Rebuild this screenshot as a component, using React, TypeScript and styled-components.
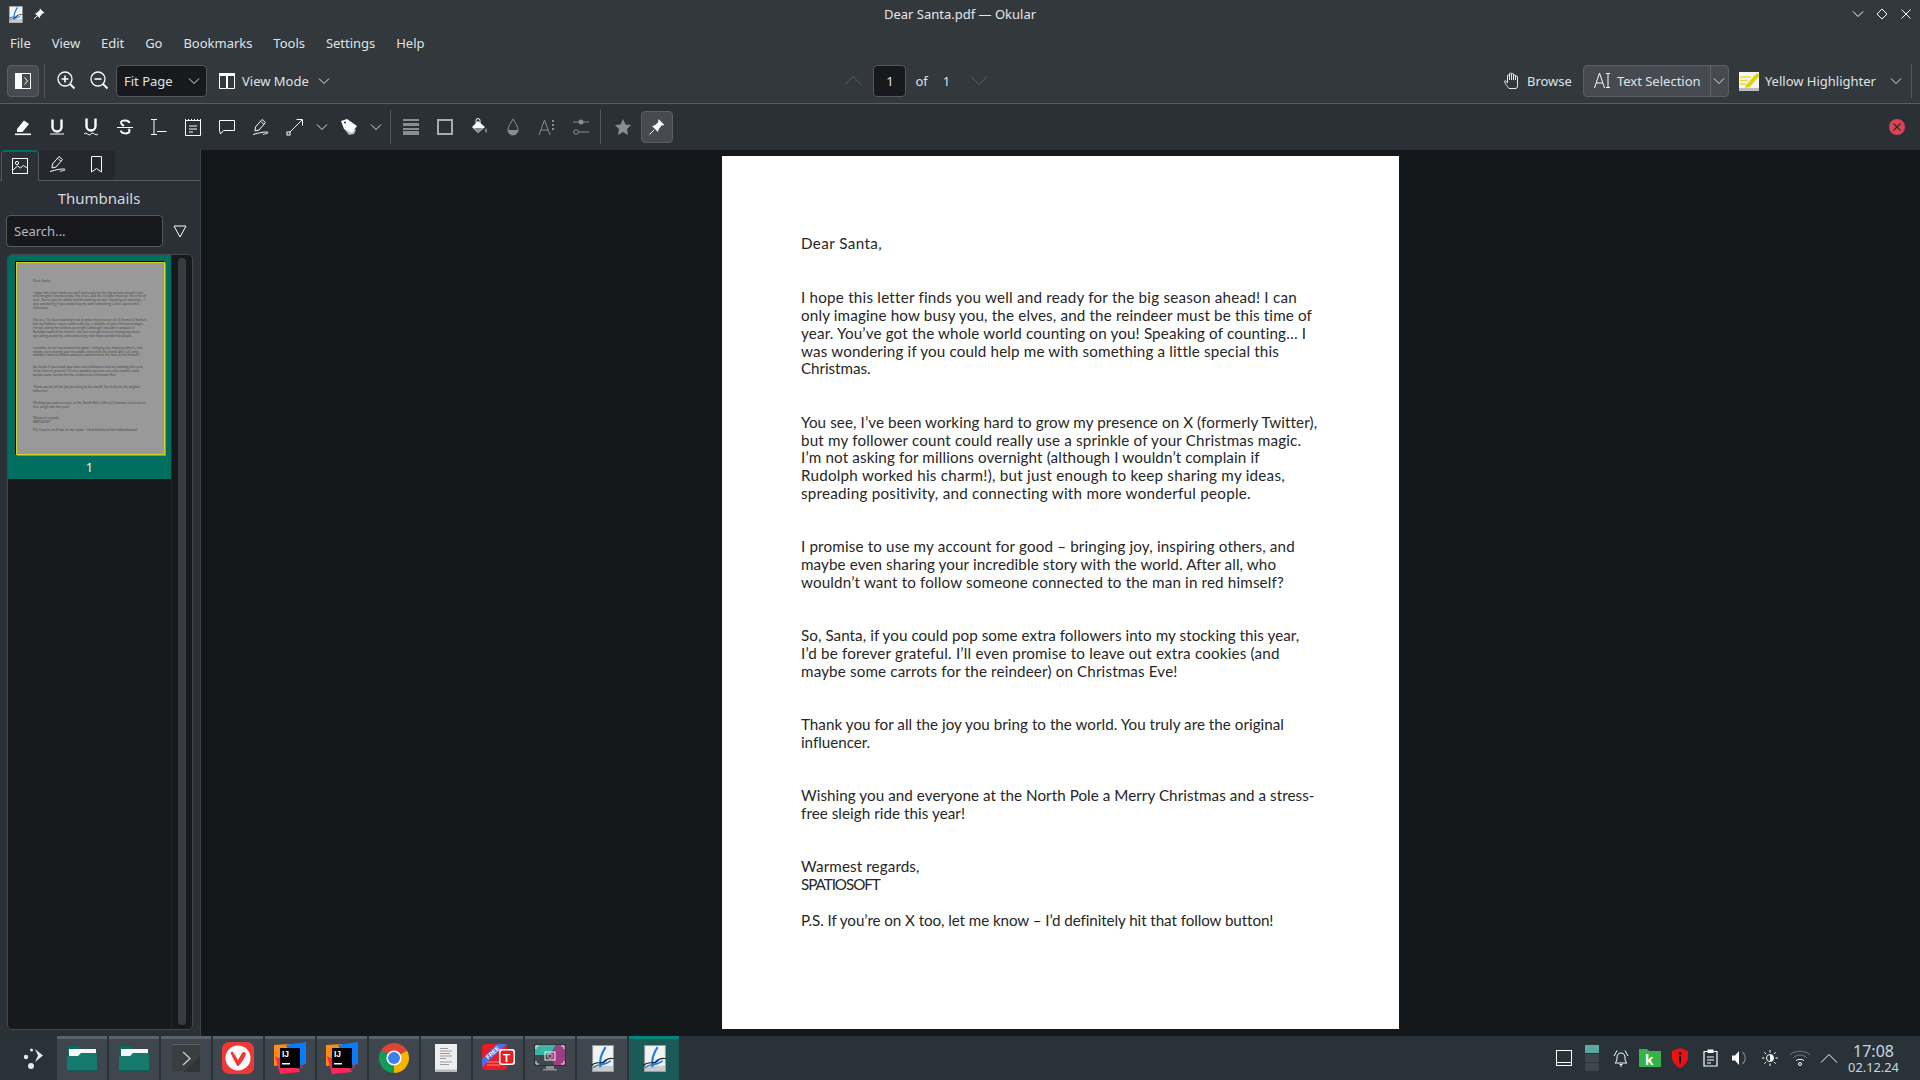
import React from "react";
import styled, { createGlobalStyle } from "styled-components";

const Global = createGlobalStyle`
  html, body { margin: 0; padding: 0; background: #14181b; }
  * { box-sizing: border-box; }
`;

const Root = styled.div`
  width: 1920px; height: 1080px; overflow: hidden;
  display: flex; flex-direction: column;
  font-family: "Noto Sans", sans-serif; font-size: 13px; color: #dfe3e6;
`;
const Head = styled.div`background: #33383c; border-bottom: 1px solid #5a5d60; height: 104px; display: flex; flex-direction: column; flex: none;`;
const TitleBar = styled.div`
  height: 28px; flex: none; display: flex; align-items: center; position: relative; padding: 0 6px 0 7px;
`;
const TitleText = styled.div`position: absolute; left: 0; right: 0; top: 5px; text-align: center; line-height: 18px; color: #e4e7ea; pointer-events: none;`;
const TitleIcons = styled.div`display: flex; align-items: center; gap: 9px;`;
const WinButtons = styled.div`margin-left: auto; display: flex; gap: 8px;`;
const MenuBar = styled.div`height: 30px; flex: none; display: flex; align-items: center;`;
const MenuItem = styled.div`padding: 0 10.45px; line-height: 18px; color: #dfe3e6; &:first-child { padding-left: 10px; }`;
const ToolBar = styled.div`height: 45px; flex: none; display: flex; align-items: center; padding: 0 8px 0 7px;`;
const Spacer = styled.div`flex: 1;`;
const Sep = styled.div<{ $h: number }>`width: 1px; height: ${p => p.$h}px; background: #55595d; flex: none;`;
const FlatBtn = styled.div<{ $w: number; $on?: boolean }>`
  width: ${p => p.$w}px; height: 32px; flex: none; display: flex; align-items: center; justify-content: center;
  border-radius: 4px; border: 1px solid ${p => (p.$on ? "#5b5f64" : "transparent")};
  background: ${p => (p.$on ? "#474b51" : "transparent")};
`;
const Combo = styled.div<{ $w: number }>`
  width: ${p => p.$w}px; height: 32px; flex: none; background: #18191d; border: 1px solid #55585c; border-radius: 4px;
  display: flex; align-items: center; justify-content: center;
`;
const ComboLabel = styled.span`flex: 1; padding-left: 7px;`;
const TextBtn = styled.div`display: flex; align-items: center; height: 32px; flex: none;`;
const Split = styled.div`
  width: 146px; height: 32px; flex: none; display: flex; background: #474b51; border: 1px solid #5b5f64; border-radius: 4px; margin: 0 10px 0 11px;
`;
const SplitMain = styled.div`flex: 1; display: flex; align-items: center; padding-left: 10px; border-right: 1px solid #62666a;`;
const SplitArrow = styled.div`width: 17px; display: flex; align-items: center; justify-content: center;`;
const Gap = styled.span<{ $w: number }>`display: inline-block; flex: none; width: ${p => p.$w}px;`;

const AnnoBar = styled.div`height: 46px; flex: none; background: #2b2f36; display: flex; align-items: center; padding: 0 15px 0 6px;`;
const Slot = styled.div<{ $w?: number }>`width: ${p => p.$w ?? 34}px; height: 32px; flex: none; display: flex; align-items: center; justify-content: center;`;
const PinBtn = styled.div`
  width: 32px; height: 32px; flex: none; margin-left: 1px; display: flex; align-items: center; justify-content: center;
  background: #474b51; border: 1px solid #5b5f64; border-radius: 4px;
`;

const Body = styled.div`flex: 1; min-height: 0; display: flex;`;
const Side = styled.div`
  width: 201px; flex: none; background: #2b2f36; border-right: 1px solid #3c4045; display: flex; flex-direction: column; padding-bottom: 6px;
`;
const Tabs = styled.div`height: 31px; flex: none; display: flex; border-bottom: 1px solid #55595d; padding-left: 1px; position: relative;`;
const Tab = styled.div<{ $on?: boolean }>`
  width: 38px; height: ${p => (p.$on ? 31 : 30)}px; display: flex; align-items: center; justify-content: center; flex: none;
  background: ${p => (p.$on ? "#2b2f36" : "#25282e")}; padding-bottom: 2px;
  ${p => p.$on && "border-top: 2px solid #006e5f; border-left: 1px solid #55595d; border-right: 1px solid #55595d; border-radius: 4px 4px 0 0;"}
`;
const SideTitle = styled.div`height: 34px; flex: none; display: flex; align-items: center; justify-content: center; color: #d5dade; font-size: 15px; padding-right: 2px;`;
const SearchRow = styled.div`display: flex; align-items: center; padding-left: 6px; flex: none; height: 32px;`;
const SearchBox = styled.div`
  width: 157px; height: 32px; background: #18191d; border: 1px solid #55585c; border-radius: 4px; padding-left: 7px; display: flex; align-items: center; color: #b6babd; flex: none;
`;
const FilterSlot = styled.div`flex: none; width: 34px; display: flex; justify-content: center;`;
const ThumbList = styled.div`
  flex: 1; margin: 7px 7px 0 7px; background: #17191c; border: 1px solid #45484d; border-radius: 5px; display: flex; overflow: hidden; min-height: 0;
`;
const ThumbColumn = styled.div`width: 164px; flex: none; border-right: 1px solid #24272a;`;
const ThumbItem = styled.div`background: #006e5f; height: 224px; padding: 7px 0 0 8px; display: flex; flex-direction: column;`;
const ThumbSheet = styled.div`
  width: 149px; height: 193px; background: #999999; border: 1px solid #d6cf2a; box-shadow: -1px -1px 0 #000, 1px 1px 0 #8a8a8a; padding: 16.5px 0 0 16px; overflow: hidden; flex: none;
`;
const ThumbLabel = styled.div`height: 24px; line-height: 24px; margin-left: -8px; text-align: center; color: #e8eeee;`;
const ScrollCol = styled.div`flex: 1; display: flex; justify-content: center; padding: 3px 0 4px;`;
const ScrollThumb = styled.div`width: 8px; background: #383c41; border-radius: 4px;`;

const Viewer = styled.div`flex: 1; background: #14181b; display: flex; justify-content: center; padding-top: 6px; align-items: flex-start;`;
const Sheet = styled.div`width: 677px; height: 873px; background: #fff; padding: 79px 0 0 79px; flex: none;`;
const LetterText = styled.div<{ $k: number; $c: string }>`
  font-family: "Lato", sans-serif; font-size: ${p => 15.2 * p.$k}px; line-height: ${p => 17.8 * p.$k}px;
  color: ${p => p.$c}; white-space: nowrap;
`;
const Para = styled.div<{ $k: number; $m: number }>`margin-top: ${p => p.$m * p.$k}px;`;
const Line = styled.div<{ $ls: number }>`letter-spacing: ${p => p.$ls}px;`;

const TaskBar = styled.div`height: 44px; flex: none; background: #2a3239; display: flex; align-items: stretch;`;
const StartSlot = styled.div`width: 57px; flex: none; display: flex; align-items: center; justify-content: center; padding-left: 10px;`;
const TaskList = styled.div`display: flex; gap: 2px;`;
const TaskItem = styled.div<{ $on?: boolean }>`
  width: 50px; display: flex; align-items: center; justify-content: center; padding-bottom: 3px;
  background: ${p => (p.$on ? "#1a5a57" : "#3f464e")};
  border-top: 3px solid ${p => (p.$on ? "#00877a" : "#59616a")};
`;
const Tray = styled.div`margin-left: auto; display: flex; align-items: center; padding-right: 21px;`;
const TraySlot = styled.div<{ $w?: number }>`width: ${p => p.$w ?? 30}px; display: flex; justify-content: center; align-items: center; flex: none;`;
const Pager = styled.div`width: 14px; height: 26px; display: flex; flex-direction: column; gap: 1px; flex: none;`;
const PagerCell = styled.div<{ $on?: boolean }>`flex: 1; background: ${p => (p.$on ? "#5aa9a3" : "#3f464e")};`;
const Clock = styled.div`width: 51px; margin-left: 9px; display: flex; flex-direction: column; align-items: center; color: #c9d6e0; flex: none;`;
const ClockTime = styled.div`font-size: 16px; line-height: 17px;`;
const ClockDate = styled.div`font-size: 12.8px; line-height: 14px;`;

const W = "#fcfcfc";
const S: React.FC<{ s?: number; h?: number; v?: string; children: React.ReactNode }> = ({ s = 18, h, v, children }) => (
  <svg width={s} height={h ?? s} viewBox={v ?? `0 0 ${s} ${h ?? s}`} fill="none" style={{ display: "block", flex: "none" }}>
    {children}
  </svg>
);

const Chevron = ({ c = "#dfe3e6", w = 10, up = false }: { c?: string; w?: number; up?: boolean }) => (
  <S s={w + 2} h={w / 2 + 3}>
    <path d={up ? `M1 ${w / 2 + 1.5} L${w / 2 + 1} 1.5 L${w + 1} ${w / 2 + 1.5}` : `M1 1.5 L${w / 2 + 1} ${w / 2 + 1.5} L${w + 1} 1.5`} stroke={c} />
  </S>
);

const OkularIcon = ({ s = 16 }: { s?: number }) => (
  <S s={s} v="0 0 22 26">
    <rect x="1.5" y="0.5" width="20" height="25" fill="#f2f3f3" stroke="#9a9d9f" />
    <rect x="2" y="20" width="19" height="5" fill="#c8cbcd" />
    <path d="M14 2 C10 8 8 14 9 20 C11 18 12 16 15 14" stroke="#1d7fe6" strokeWidth="2" />
    <path d="M0 20 C6 14 10 20 14 15 C17 12 19 13 22 13" stroke="#222" strokeWidth="1" />
    <path d="M2 22 C6 17 12 21 19 15" stroke="#2a78c8" strokeWidth="1.4" />
  </S>
);
const Folder = () => (
  <S s={30} h={27}>
    <path d="M1 1 h10 l3 3 h15 v6 H1z" fill="#0c6a5f" />
    <rect x="2" y="4" width="27" height="8" fill="#f6f7f7" />
    <path d="M0 11 h11 l3 -3 h16 v19 H0z" fill="#16796e" />
    <rect x="0" y="25" width="30" height="2" fill="#0e5e55" />
  </S>
);
const Terminal = () => (
  <S s={28}>
    <rect width="28" height="27" fill="#3a3e41" />
    <rect width="28" height="1" fill="#5b5f62" />
    <path d="M12 28 L28 12 V28z" fill="#313437" />
    <path d="M11 8 l7 6.5 l-7 6.5" stroke="#c6c9cb" strokeWidth="1.4" />
  </S>
);
const Vivaldi = () => (
  <S s={32}>
    <rect width="32" height="32" rx="7" fill="#ef3939" />
    <circle cx="16" cy="16" r="12.5" fill="#fff" />
    <path d="M9 12 C8 10 10 9 11 10 L16 18 L20 11 C21 9 24 10 24 12 C24 14 18 23 16.5 24 C15 24.5 14 22 9 12z" fill="#ef3939" />
  </S>
);
const Idea = () => (
  <S s={32}>
    <path d="M0 3 L16 2 V22 L0 24z" fill="#ff8a16" />
    <path d="M12 3 L32 0 V22 L22 24z" fill="#0a7bff" />
    <path d="M1 14 L24 30 L30 20 L28 26 L6 32z" fill="#fe2857" />
    <path d="M3 16 L16 14 L26 30 L7 32z" fill="#fe2857" />
    <rect x="6" y="6" width="20" height="20" fill="#000" />
    <text x="8" y="15" fontFamily="'Liberation Sans', sans-serif" fontWeight="700" fontSize="8.5" fill="#fff">IJ</text>
    <rect x="8" y="21" width="8" height="1.5" fill="#fff" />
  </S>
);
const Chrome = () => (
  <S s={32}>
    <path d="M16 16 L3 8.5 A15 15 0 0 1 29 8.5z" fill="#db4437" />
    <path d="M16 16 L3 8.5 A15 15 0 0 0 16 31z" fill="#0f9d58" />
    <path d="M16 16 L29 8.5 A15 15 0 0 1 16 31z" fill="#f4b400" />
    <circle cx="16" cy="16" r="7.6" fill="#fff" />
    <circle cx="16" cy="16" r="6" fill="#3f7fe8" />
  </S>
);
const DocIcon = () => (
  <S s={22} h={28}>
    <rect width="22" height="28" fill="#eeeeee" />
    <rect y="25.5" width="22" height="2.5" fill="#bbbbbb" />
    <path d="M5 4.5h8M5 7h12M5 9.5h10M5 12h12M5 14.5h6M5 18h12M5 20.5h9" stroke="#9a9a9a" />
  </S>
);
const FreeT = () => (
  <S s={33} h={28}>
    <rect width="25" height="26" rx="4" fill="#e61d22" />
    <path d="M0 15 L15 0 H25 L0 23z" fill="#4d6fe2" />
    <text x="4" y="14" fontFamily="'Liberation Sans', sans-serif" fontWeight="700" fontSize="6" fill="#fff" transform="rotate(-42 7 12)">FREE</text>
    <path d="M5 18h13M5 21h13" stroke="#f8858a" />
    <rect x="17" y="5" width="16" height="16" rx="3" fill="#fff" />
    <rect x="18.5" y="6.5" width="13" height="13" rx="2" fill="#e61d22" />
    <text x="21" y="17.5" fontFamily="'Liberation Sans', sans-serif" fontWeight="700" fontSize="11.5" fill="#fff">T</text>
  </S>
);
const ShotIcon = () => (
  <S s={32} h={28}>
    <rect width="32" height="22" fill="#2d3236" />
    <path d="M1 1 H22 L16 11 H1z" fill="#3bb5a8" />
    <path d="M22 1 H31 V21 H20 L16 11z" fill="#9c3f80" />
    <path d="M1 11 H16 L20 21 H1z" fill="#3c4a4b" />
    <rect x="11" y="8" width="10" height="8" fill="none" stroke="#f2f2f2" />
    <circle cx="16" cy="12" r="2.3" stroke="#f2a5c5" />
    <path d="M12 22 h8 v3 h3 v1.5 H9 V25 h3z" fill="#8b9093" />
    <path d="M2 5V2h3M30 5V2h-3M2 17v3h3M30 17v3h-3" stroke="#e8e8e8" />
  </S>
);

type L = [string, number];
const BODY: L[][] = [
  [["Dear Santa,", 2]],
  [
    ["I hope this letter finds you well and ready for the big season ahead! I can", 2],
    ["only imagine how busy you, the elves, and the reindeer must be this time of", -2],
    ["year. You’ve got the whole world counting on you! Speaking of counting… I", -2],
    ["was wondering if you could help me with something a little special this", -2],
    ["Christmas.", -2],
  ],
  [
    ["You see, I’ve been working hard to grow my presence on X (formerly Twitter),", -6],
    ["but my follower count could really use a sprinkle of your Christmas magic.", -1],
    ["I’m not asking for millions overnight (although I wouldn’t complain if", -3],
    ["Rudolph worked his charm!), but just enough to keep sharing my ideas,", 3],
    ["spreading positivity, and connecting with more wonderful people.", 3],
  ],
  [
    ["I promise to use my account for good – bringing joy, inspiring others, and", -2],
    ["maybe even sharing your incredible story with the world. After all, who", -5],
    ["wouldn’t want to follow someone connected to the man in red himself?", -2],
  ],
  [
    ["So, Santa, if you could pop some extra followers into my stocking this year,", -8],
    ["I’d be forever grateful. I’ll even promise to leave out extra cookies (and", 0],
    ["maybe some carrots for the reindeer) on Christmas Eve!", -2],
  ],
  [["Thank you for all the joy you bring to the world. You truly are the original", -10], ["influencer.", -2]],
  [["Wishing you and everyone at the North Pole a Merry Christmas and a stress-", -8], ["free sleigh ride this year!", -3]],
  [["Warmest regards,", -1], ["SPATIOSOFT", -10]],
  [["P.S. If you’re on X too, let me know – I’d definitely hit that follow button!", -17]],
];

const Letter = ({ k, c }: { k: number; c: string }) => (
  <LetterText $k={k} $c={c}>
    {BODY.map((lines, i) => (
      <Para key={i} $k={k} $m={i === 0 ? 0 : i === 1 ? 36.5 : i === BODY.length - 1 ? 18.2 : 35.5}>
        {lines.map(([t, d]) => (
          <Line key={t} $ls={(0.19 + (d * 1.2245) / t.length) * k}>{t}</Line>
        ))}
      </Para>
    ))}
  </LetterText>
);

const G = "#8b8e91";
const annoIcons: React.ReactNode[] = [
  <S key="h"><path d="M3 11 L10 2.5 L15 6 L8.5 14 H3z" fill={W} /><rect x="1" y="15.5" width="16" height="1.6" fill={W} /></S>,
  <S key="u"><path d="M4.5 1.5 V9 a4.5 4.5 0 0 0 9 0 V1.5" stroke={W} strokeWidth="2.4" /><rect x="2" y="15.5" width="14" height="1" fill={W} /></S>,
  <S key="s"><path d="M4.5 0.5 V8 a4.5 4.5 0 0 0 9 0 V0.5" stroke={W} strokeWidth="2.4" /><path d="M2 16 q1.7 -2 3.5 0 t3.5 0 t3.5 0 t3.5 0" stroke={W} /></S>,
  <S key="t"><rect x="1" y="9" width="16" height="1" fill={W} /><path d="M13.5 5 C13 2 5 1.5 5 4.5 C5 6 6.5 7 8 7.8 M5 12.5 C5 16 13.5 16.5 13.5 13 C13.5 12 13 11.5 12.5 11" stroke={W} strokeWidth="2" /></S>,
  <S key="i"><path d="M1 1.5h6M4 1.5v15M1 16.5h6M7 13.5h9.5" stroke={W} /></S>,
  <S key="n"><path d="M1.5 2.5 h15 v15 h-15z M5 8h8M5 11h8M5 14h4" stroke={W} /><path d="M1.5 1v2M4.5 1v2M7.5 1v2M10.5 1v2M13.5 1v2M16.5 1v2" stroke={W} /></S>,
  <S key="c"><path d="M1.5 2.5 h15 v10 H5.5 L2.5 16 L1.5 12.5z" stroke={W} /></S>,
  <S key="f"><path d="M3.5 9 L10 1.5 L13.5 4.5 L7 12 L3 13z M9 3.5 L12 6.5" stroke={W} /><path d="M1 16.5 C6 15 15 13 16 14.5 C16.5 16 11 15.5 11 17" stroke={W} /></S>,
  <S key="l"><path d="M3 15 L16 2 M10.5 1.5 H16.5 V7.5" stroke={W} /><rect x="1" y="14" width="3" height="3" stroke={W} fill="#2b2f36" /></S>,
];
const annoTools: React.ReactNode[] = [
  <S key="w"><rect x="1" y="1" width="16" height="2" fill={G} /><rect x="1" y="5" width="16" height="3" fill={G} /><rect x="1" y="10" width="16" height="2" fill={G} /><rect x="1" y="13" width="16" height="4" fill={G} /></S>,
  <S key="r"><rect x="2" y="2" width="14" height="14" stroke="#a8abae" strokeWidth="2" /></S>,
  <S key="b"><path d="M8 3 L15 9 L8 15 L2 9z" fill={W} /><path d="M6 5 V2.5 a2 2 0 0 1 4 0 V7" stroke={W} /><path d="M16 10 q2 3 0 5 q-2 -2 0 -5" fill={G} /><path d="M4 10 h9 L8 15z" fill={G} /></S>,
  <S key="d"><path d="M9 1 C7 5 4 8 4 12 a5 5 0 0 0 10 0 C14 8 11 5 9 1z" stroke={G} /><path d="M4 12 h10 a5 5 0 0 1 -10 0z" fill={G} /></S>,
  <S key="a"><path d="M1 17 L6.5 2 L12 17 M3 12 h7" stroke={G} /><path d="M15 2v2M15 6v2M15 10v2" stroke={G} strokeWidth="2" /></S>,
  <S key="sl"><path d="M1 4h16M1 14h16" stroke={G} /><circle cx="9" cy="4" r="2.5" fill={G} /><circle cx="4" cy="14" r="2.3" fill="#2b2f36" stroke={G} /></S>,
];

export default function App() {
  return (
    <Root>
      <Global />
      <Head>
        <TitleBar>
          <TitleIcons>
            <OkularIcon s={17} />
            <S s={12}><path d="M7 0.5 L11.5 5 L9.5 5.5 L7 8.5 L6.5 10 L2 5.5 L3.5 5 L6.5 2.5z" fill={W} /><path d="M4 8 L1 11" stroke={W} /></S>
          </TitleIcons>
          <TitleText>Dear Santa.pdf — Okular</TitleText>
          <WinButtons>
            <Slot $w={16}><Chevron w={10} c={W} /></Slot>
            <Slot $w={16}><S s={12}><path d="M6 1 L11 6 L6 11 L1 6z" stroke={W} /></S></Slot>
            <Slot $w={16}><S s={12}><path d="M1.5 1.5 L10.5 10.5 M10.5 1.5 L1.5 10.5" stroke={W} /></S></Slot>
          </WinButtons>
        </TitleBar>
        <MenuBar>
          {["File", "View", "Edit", "Go", "Bookmarks", "Tools", "Settings", "Help"].map(m => (
            <MenuItem key={m}>{m}</MenuItem>
          ))}
        </MenuBar>
        <ToolBar>
          <FlatBtn $w={32} $on>
            <S s={16}><rect x="0.5" y="0.5" width="15" height="15" stroke={W} fill="#474b51" /><rect width="7" height="16" fill={W} /><path d="M9.5 4.5 L12.5 8 L9.5 11.5" stroke={W} /></S>
          </FlatBtn>
          <Gap $w={5} />
          <Sep $h={34} />
          <Gap $w={4} />
          <FlatBtn $w={34}>
            <S s={19}><circle cx="8" cy="8" r="7" stroke={W} strokeWidth="1.3" /><path d="M4.5 8h7M8 4.5v7" stroke={W} strokeWidth="1.6" /><path d="M13 13 L17.5 17.5" stroke={W} strokeWidth="2" /></S>
          </FlatBtn>
          <FlatBtn $w={33}>
            <S s={19}><circle cx="8" cy="8" r="7" stroke={W} strokeWidth="1.3" /><path d="M4.5 8h7" stroke={W} strokeWidth="1.6" /><path d="M13 13 L17.5 17.5" stroke={W} strokeWidth="2" /></S>
          </FlatBtn>
          <Combo $w={91}>
            <ComboLabel>Fit Page</ComboLabel>
            <Slot $w={25}><Chevron /></Slot>
          </Combo>
          <Gap $w={12} />
          <TextBtn>
            <S s={16}><path d="M0.5 0.5h7v15h-7zM8.5 0.5h7v15h-7z" stroke={W} /><path d="M0 0h16v3H0z" fill={W} /></S>
            <Gap $w={7} />
            View Mode
            <Gap $w={9} />
            <Chevron />
          </TextBtn>
          <Spacer />
          <Slot $w={20}><Chevron c="#5c6064" w={16} up /></Slot>
          <Gap $w={10} />
          <Combo $w={33}>1</Combo>
          <Gap $w={9} />
          of
          <Gap $w={15} />
          1
          <Gap $w={19} />
          <Slot $w={20}><Chevron c="#5c6064" w={16} /></Slot>
          <Spacer />
          <TextBtn>
            <S s={18}><path d="M6 16.5 C4 14 1 10 1.5 9 C2.5 8 4 10 4.5 11 V4 a1 1 0 0 1 2 0 V2 a1 1 0 0 1 2 0 V2.5 a1 1 0 0 1 2 0 V4 a1 1 0 0 1 2 0 V5 a1 1 0 0 1 2 0 V12 C15 14 14 16.5 13 16.5z M6.5 4v4M8.5 2v6M10.5 2.5V8M12.5 4V8" stroke={W} strokeWidth="0.9" /></S>
            <Gap $w={6} />
            Browse
          </TextBtn>
          <Split>
            <SplitMain>
              <S s={17}><path d="M0.5 16 L5.5 1 L10.5 16 M2.5 11 h6" stroke={W} /><path d="M12 1.5h4M14 1.5v14M12 15.5h4" stroke={W} /></S>
              <Gap $w={6} />
              Text Selection
            </SplitMain>
            <SplitArrow><Chevron /></SplitArrow>
          </Split>
          <TextBtn>
            <S s={20}>
              <rect y="1" width="20" height="19" fill="#f4f4f4" />
              <path d="M1 6h11M1 9.5h8M1 13h6" stroke="#e3dd25" strokeWidth="1.5" />
              <path d="M7 14 L18 2 L21 4 L11 16 L6 17z" fill="#d8d410" />
              <rect y="17" width="20" height="3" fill="#bdbdbd" />
            </S>
            <Gap $w={6} />
            Yellow Highlighter
            <Gap $w={14} />
            <Chevron />
            <Gap $w={9} />
            <Sep $h={34} />
          </TextBtn>
        </ToolBar>
      </Head>
      <AnnoBar>
        {annoIcons.map((ic, i) => (
          <Slot key={i}>{ic}</Slot>
        ))}
        <Slot $w={20}><Chevron /></Slot>
        <Slot>
          <S>
            <path d="M3 7 L5 12 L9 17 L14 16 L16 12z" fill="#b9bcbe" />
            <path d="M1 3 L7 1 L17 8 L12 15 L4 11z" fill={W} />
            <circle cx="5" cy="4.5" r="1" fill="#2b2f36" />
          </S>
        </Slot>
        <Slot $w={20}><Chevron /></Slot>
        <Gap $w={4} />
        <Sep $h={34} />
        <Gap $w={3} />
        {annoTools.map((ic, i) => (
          <Slot key={i}>{ic}</Slot>
        ))}
        <Gap $w={2} />
        <Sep $h={34} />
        <Gap $w={5} />
        <Slot><S><path d="M9 1 L11.5 6.5 L17 7 L13 11 L14 17 L9 14 L4 17 L5 11 L1 7 L6.5 6.5z" fill={G} /></S></Slot>
        <PinBtn><S><path d="M10.5 1 L16.5 7 L13.5 7.5 L10.5 11.5 L10 14 L4 8 L6.5 7.5 L10 4.5z" fill={W} /><path d="M6 12 L1.5 16.5" stroke={W} /></S></PinBtn>
        <Spacer />
        <S s={16}><circle cx="8" cy="8" r="8" fill="#da4453" /><path d="M4.5 4.5 L11.5 11.5 M11.5 4.5 L4.5 11.5" stroke="#33262b" strokeWidth="1.2" /></S>
      </AnnoBar>
      <Body>
        <Side>
          <Tabs>
            <Tab $on>
              <S s={16}><rect x="0.5" y="0.5" width="15" height="15" stroke={W} /><circle cx="5" cy="5" r="1.6" stroke={W} /><path d="M1 12 L5.5 8 L8.5 10 L11.5 7.5 L15 10" stroke={W} /></S>
            </Tab>
            <Tab>
              <S><path d="M3.5 9 L10 1.5 L13.5 4.5 L7 12 L3 13z M9 3.5 L12 6.5" stroke={W} /><path d="M1 16.5 C6 15 15 13 16 14.5 C16.5 16 11 15.5 11 17" stroke={W} /></S>
            </Tab>
            <Tab>
              <S s={11} h={17}><path d="M0.5 0.5 h10 V16 L5.5 12.5 L0.5 16z" stroke={W} /></S>
            </Tab>
          </Tabs>
          <SideTitle>Thumbnails</SideTitle>
          <SearchRow>
            <SearchBox>Search...</SearchBox>
            <FilterSlot><S s={14}><path d="M1 2 h12 L7 13z" stroke={W} /></S></FilterSlot>
          </SearchRow>
          <ThumbList>
            <ThumbColumn>
              <ThumbItem>
                <ThumbSheet><Letter k={0.2216} c="#4a4a4a" /></ThumbSheet>
                <ThumbLabel>1</ThumbLabel>
              </ThumbItem>
            </ThumbColumn>
            <ScrollCol><ScrollThumb /></ScrollCol>
          </ThumbList>
        </Side>
        <Viewer>
          <Sheet><Letter k={1} c="#262626" /></Sheet>
        </Viewer>
      </Body>
      <TaskBar>
        <StartSlot>
          <S s={24}><circle cx="4" cy="11" r="2.2" fill="#e8e8e8" /><circle cx="9" cy="20" r="3" fill="#e8e8e8" /><circle cx="9.5" cy="4" r="1.5" fill="#e8e8e8" /><path d="M13 3 L21 9.5 L13 16 L16 9.5z" fill="#e8e8e8" /></S>
        </StartSlot>
        <TaskList>
          <TaskItem><Folder /></TaskItem>
          <TaskItem><Folder /></TaskItem>
          <TaskItem><Terminal /></TaskItem>
          <TaskItem><Vivaldi /></TaskItem>
          <TaskItem><Idea /></TaskItem>
          <TaskItem><Idea /></TaskItem>
          <TaskItem><Chrome /></TaskItem>
          <TaskItem><DocIcon /></TaskItem>
          <TaskItem><FreeT /></TaskItem>
          <TaskItem><ShotIcon /></TaskItem>
          <TaskItem><OkularIcon s={27} /></TaskItem>
          <TaskItem $on><OkularIcon s={27} /></TaskItem>
        </TaskList>
        <Tray>
          <TraySlot $w={34}><S s={16}><rect x="0.5" y="0.5" width="15" height="15" stroke={W} /><path d="M1 12.5h14" stroke={W} /></S></TraySlot>
          <TraySlot $w={22}><Pager><PagerCell $on /><PagerCell /><PagerCell /></Pager></TraySlot>
          <TraySlot $w={36}><S s={18}><path d="M9 4 C6 4 5 6 5 9 C5 12 4 13 3 14 H15 C14 13 13 12 13 9 C13 6 12 4 9 4z M7.5 15.5 h3 M8 17 h2" stroke={W} /><path d="M2 7 L5 1.5 M16 7 L13 1.5" stroke={W} /></S></TraySlot>
          <TraySlot $w={22}>
            <S s={22}><path d="M0 2 h8 l2 2 h12 v15 a1 1 0 0 1 -1 1 H1 a1 1 0 0 1 -1 -1z" fill="#35b34a" /><text x="6" y="17.5" fontFamily="'Liberation Sans', sans-serif" fontWeight="700" fontSize="15" fill="#fff">k</text></S>
          </TraySlot>
          <TraySlot $w={38}>
            <S s={18} h={20}><path d="M9 0 L17 3 V9 C17 14 13 18 9 20 C5 18 1 14 1 9 V3z" fill="#ee1111" /><circle cx="9" cy="5.5" r="1.4" fill="#111" /><rect x="8" y="8" width="2" height="8" fill="#111" /></S>
          </TraySlot>
          <TraySlot $w={22}><S s={15} h={18}><path d="M4.5 2.5 H1 V17 H14 V2.5 H10.5" stroke={W} strokeWidth="1.2" /><rect x="4.5" y="0.5" width="6" height="3.5" fill={W} /><path d="M4 8h7M4 11h7M4 14h4" stroke={W} /></S></TraySlot>
          <TraySlot $w={38}><S s={18}><path d="M1 6.5 h3 L8 2 V16 L4 11.5 H1z" fill={W} /><path d="M11.5 3 a8 8 0 0 1 0 12" stroke="#7c8084" strokeWidth="1.2" /></S></TraySlot>
          <TraySlot $w={22}><S s={16}><circle cx="8" cy="8" r="3.5" stroke={W} /><path d="M8 4.5 a3.5 3.5 0 0 1 0 7z" fill={W} /><path d="M8 0v2.5M8 13.5V16M0 8h2.5M13.5 8H16M2.3 2.3l1.8 1.8M11.9 11.9l1.8 1.8M2.3 13.7l1.8 -1.8M11.9 4.1l1.8 -1.8" stroke={W} /></S></TraySlot>
          <TraySlot $w={38}><S s={22} h={16}><path d="M1 5 C6 0 16 0 21 5" stroke="#71767a" /><path d="M4 8 C8 4 14 4 18 8" stroke="#71767a" /><path d="M7 10.5 C9 9 13 9 15 10.5" stroke={W} /><circle cx="11" cy="14" r="1.5" stroke={W} /></S></TraySlot>
          <TraySlot $w={20}><Chevron c={W} w={16} up /></TraySlot>
          <Clock>
            <ClockTime>17:08</ClockTime>
            <ClockDate>02.12.24</ClockDate>
          </Clock>
        </Tray>
      </TaskBar>
    </Root>
  );
}
